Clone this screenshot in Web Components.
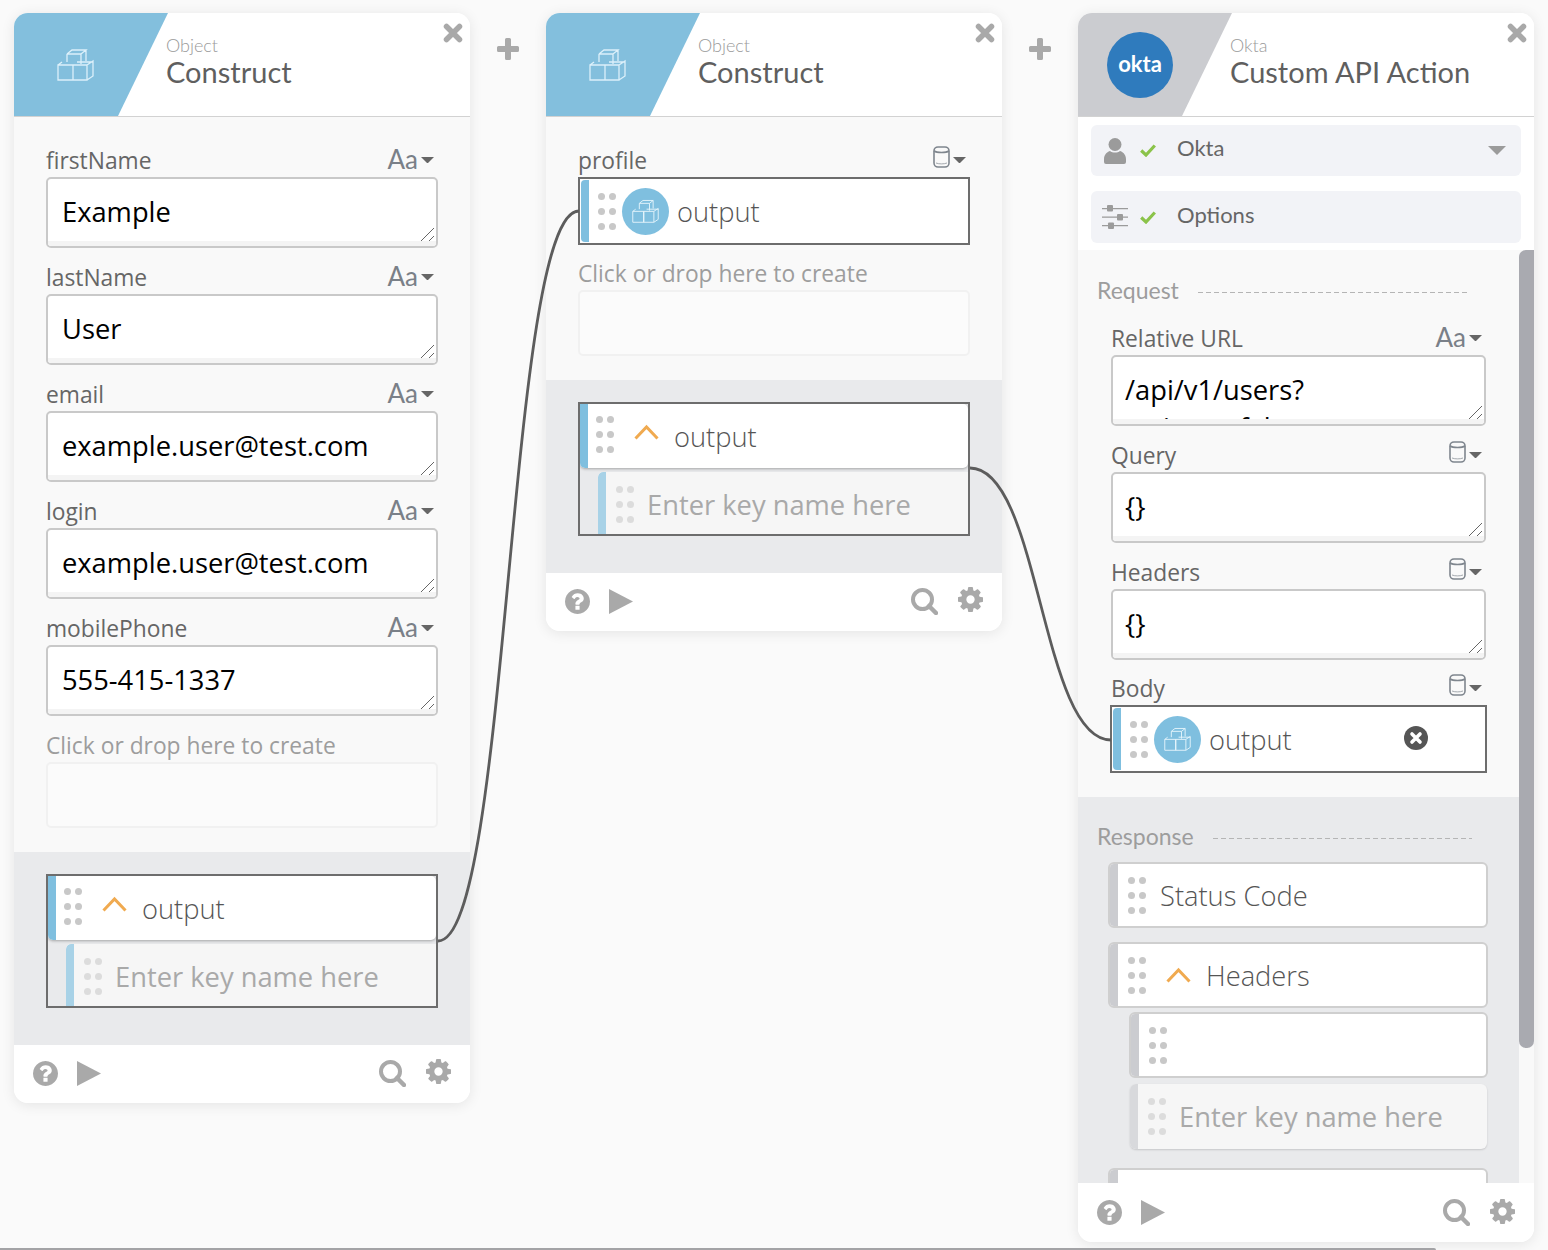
<!DOCTYPE html>
<html lang="en">
<head>
<meta charset="UTF-8">
<title>Workflow</title>
<style>
    html, body { margin: 0; height: 1250px; overflow: hidden; background: #fafafa; }
    body { font-family: "Open Sans", sans-serif; }
</style>
</head>
<body>

<wf-canvas>
    <wf-card>
        <wf-header kind="Object" title="Construct"><wf-icon name="cubes" style="--w:37px;--h:33px"></wf-icon></wf-header>
        <wf-pane style="--pad:16px 32px 22px">
            <wf-field label="firstName" type="aa"><wf-box>Example</wf-box></wf-field>
            <wf-field label="lastName" type="aa"><wf-box>User</wf-box></wf-field>
            <wf-field label="email" type="aa"><wf-box>example.user@test.com</wf-box></wf-field>
            <wf-field label="login" type="aa"><wf-box>example.user@test.com</wf-box></wf-field>
            <wf-field label="mobilePhone" type="aa"><wf-box>555-415-1337</wf-box></wf-field>
            <wf-field label="Click or drop here to create" muted><wf-box empty></wf-box></wf-field>
        </wf-pane>
        <wf-pane tone="gray" style="--pad:22px 32px 37px">
            <wf-group>
                <wf-tile plain tone="blue" chevron>output</wf-tile>
                <wf-tile plain child tone="blue">Enter key name here</wf-tile>
            </wf-group>
        </wf-pane>
        <wf-footer></wf-footer>
    </wf-card>

    <wf-plus></wf-plus>

    <wf-card>
        <wf-header kind="Object" title="Construct"><wf-icon name="cubes" style="--w:37px;--h:33px"></wf-icon></wf-header>
        <wf-pane style="--pad:16px 32px 22px">
            <wf-field label="profile" type="db" style="--after:1px"><wf-tile outlined tone="blue" badge>output</wf-tile></wf-field>
            <wf-field label="Click or drop here to create" muted><wf-box empty></wf-box></wf-field>
        </wf-pane>
        <wf-pane tone="gray" style="--pad:22px 32px 37px">
            <wf-group>
                <wf-tile plain tone="blue" chevron>output</wf-tile>
                <wf-tile plain child tone="blue">Enter key name here</wf-tile>
            </wf-group>
        </wf-pane>
        <wf-footer></wf-footer>
    </wf-card>

    <wf-plus></wf-plus>

    <wf-card style="--card-h:1229px">
        <wf-header kind="Okta" title="Custom API Action" tone="okta"><wf-okta></wf-okta></wf-header>
        <wf-pane style="--pad:8px 13px 7px;--bg:#fff;--gap:15px">
            <wf-row icon="person" height="51" caret>Okta</wf-row>
            <wf-row icon="sliders" height="52">Options</wf-row>
        </wf-pane>
        <wf-scroller>
            <wf-pane style="--pad:29px 33px 24px;--box-pad:12px">
                <wf-heading style="--left:-14px;--lead:18px;--below:10px">Request</wf-heading>
                <wf-field label="Relative URL" type="aa"><wf-box>/api/v1/users?<br>activate=false</wf-box></wf-field>
                <wf-field label="Query" type="db"><wf-box>{}</wf-box></wf-field>
                <wf-field label="Headers" type="db"><wf-box>{}</wf-box></wf-field>
                <wf-field label="Body" type="db" style="--after:0px;--label:43px"><wf-tile outlined tone="blue" badge clear style="margin:0 -1px">output</wf-tile></wf-field>
            </wf-pane>
            <wf-pane tone="gray" style="--pad:28px 31px 0 30px;--clip:386px">
                <wf-heading style="--left:-11px;--lead:16px;--below:15px">Response</wf-heading>
                <wf-tile indent>Status Code</wf-tile>
                <wf-tile indent chevron style="margin-top:14px">Headers</wf-tile>
                <wf-tile indent style="margin:4px 0 0 21px"></wf-tile>
                <wf-tile indent child-plain style="margin:6px 1px 0 22px">Enter key name here</wf-tile>
                <wf-tile indent style="margin-top:19px"></wf-tile>
            </wf-pane>
        </wf-scroller>
        <wf-footer style="--foot:59px;--foot-b:0px"></wf-footer>
    </wf-card>

    <wf-links></wf-links>
</wf-canvas>

<script>

    const ICONS = {
        cubes: `<svg viewBox="0 0 37 33" fill="none" stroke="currentColor" stroke-width="1.3">
            <path d="M1 17h15v15H1zM1 17l4-3M16 17v15M16 17h14v15H16zM30 17l6-4v15l-6 4M20 14h16"/>
            <path d="M10 6h14v10M10 6v8M10 6l5-4h14l-5 4M29 2v11"/></svg>`,
        caret: `<svg viewBox="0 0 14 7"><path d="M0 0h14L7 7z" fill="currentColor"/></svg>`,
        db: `<svg viewBox="0 0 17 22" fill="none" stroke="currentColor" stroke-width="1.6">
            <rect x="1" y="1" width="15" height="20" rx="4"/><path d="M1 5c3 2 12 2 15 0"/><path d="M3 17c3 1.200 8 1.200 11 0" stroke-width=".7"/></svg>`,
        chevron: `<svg viewBox="0 0 25 16" fill="none" stroke="currentColor" stroke-width="3"><path d="M1.500 14.500 12.500 3l11 11.500"/></svg>`,
        close: `<svg viewBox="0 0 20 20" fill="none" stroke="currentColor" stroke-width="5.500" stroke-linecap="round"><path d="M3.500 3.500l13 13M16.500 3.500l-13 13"/></svg>`,
        plus: `<svg viewBox="0 0 22 22"><path d="M8 1.500q0-1.500 1.500-1.500h3q1.500 0 1.500 1.500V8h6.500q1.500 0 1.500 1.500v3q0 1.500-1.500 1.500H14v6.500q0 1.500-1.500 1.500h-3Q8 22 8 20.500V14H1.500Q0 14 0 12.500v-3Q0 8 1.500 8H8z" fill="currentColor"/></svg>`,
        help: `<svg viewBox="128 128 1536 1536"><path fill="currentColor" d="M1024 1376v-192q0-14-9-23t-23-9h-192q-14 0-23 9t-9 23v192q0 14 9 23t23 9h192q14 0 23-9t9-23zm256-672q0-88-55.500-163t-138.500-116-170-41q-243 0-371 213-15 24 8 42l132 100q7 6 19 6 16 0 25-12 53-68 86-92 34-24 86-24 48 0 85.500 26t37.500 59q0 38-20 61t-68 45q-63 28-115.500 86.500t-52.500 125.500v36q0 14 9 23t23 9h192q14 0 23-9t9-23q0-19 21.500-49.500t54.500-49.500q32-18 49-28.500t46-35 44.500-48 28-60.500 12.500-81zm384 192q0 209-103 385.500t-279.500 279.500-385.500 103-385.500-103-279.500-279.500-103-385.500 103-385.500 279.500-279.500 385.500-103 385.500 103 279.500 279.500 103 385.500z"/></svg>`,
        play: `<svg viewBox="0 0 24 25"><path d="M0 0l24 12.500L0 25z" fill="currentColor"/></svg>`,
        search: `<svg viewBox="0 0 27 27" fill="none" stroke="currentColor"><circle cx="11.500" cy="11.500" r="9.500" stroke-width="4"/><path d="M18 18l7 7" stroke-width="4.500" stroke-linecap="round"/></svg>`,
        gear: `<svg viewBox="128 128 1536 1536"><path fill="currentColor" d="M1152 896q0-106-75-181t-181-75-181 75-75 181 75 181 181 75 181-75 75-181zm512-109v222q0 12-8 23t-20 13l-185 28q-19 54-39 91 35 50 107 138 10 12 10 25t-9 23q-27 37-99 108t-94 71q-12 0-26-9l-138-108q-44 23-91 38-16 136-29 186-7 28-36 28h-222q-14 0-24.500-8.500t-11.500-21.500l-28-184q-49-16-90-37l-141 107q-10 9-25 9-14 0-25-11-126-114-165-168-7-10-7-23 0-12 8-23 15-21 51-66.500t54-70.500q-27-50-41-99l-183-27q-13-2-21-12.500t-8-23.500v-222q0-12 8-23t19-13l186-28q14-46 39-92-40-57-107-138-10-12-10-24 0-10 9-23 26-36 98.500-107.500t94.500-71.500q13 0 26 10l138 107q44-23 91-38 16-136 29-186 7-28 36-28h222q14 0 24.500 8.500t11.500 21.500l28 184q49 16 90 37l142-107q9-9 24-9 13 0 25 10 129 119 165 170 7 8 7 22 0 12-8 23-15 21-51 66.500t-54 70.500q26 50 41 98l183 28q13 2 21 12.500t8 23.500z"/></svg>`,
        person: `<svg viewBox="0 0 22 26"><circle cx="11" cy="6.500" r="6.500" fill="currentColor"/><path d="M0 21c0-5 4-7.500 6-8 2.500 2 7.500 2 10 0 2 .5 6 3 6 8v3q0 2-2 2H2q-2 0-2-2z" fill="currentColor"/></svg>`,
        sliders: `<svg viewBox="0 0 26 24" fill="currentColor"><path d="M0 3h26v1.300H0zM0 11.500h26v1.300H0zM0 20h26v1.300H0z"/><rect x="5" y="0" width="6" height="6.500" rx="1"/><rect x="15" y="9" width="6" height="6.500" rx="1"/><rect x="6" y="17.500" width="6" height="6.500" rx="1"/></svg>`,
        check: `<svg viewBox="0 0 16 13" fill="none" stroke="currentColor" stroke-width="3.200"><path d="M1.200 6.500 6 11l8.800-9.500"/></svg>`,
        clear: `<svg viewBox="0 0 24 24"><circle cx="12" cy="12" r="12" fill="currentColor"/><path d="M8 8l8 8M16 8l-8 8" stroke="#fff" stroke-width="3.600" stroke-linecap="round"/></svg>`,
        grip: `<svg viewBox="0 0 14 14" fill="none" stroke="#666" stroke-width="1"><path d="M1 14 14 1M9 14l5-5"/></svg>`
    };

    class WfIcon extends HTMLElement {
        constructor() {
            super();
            this.attachShadow({mode: "open"});
            this.shadowRoot.innerHTML = `<style>
                :host { display: block; width: var(--w, 20px); height: var(--h, 20px); color: var(--c, #a9a9a9); flex: none; }
                svg { display: block; width: 100%; height: 100%; }
            </style>${ICONS[this.getAttribute("name")]}`;
        }
    }

    class WfCanvas extends HTMLElement {
        constructor() {
            super();
            this.attachShadow({mode: "open"});
            this.shadowRoot.innerHTML = `<style>
                :host { display: flex; align-items: flex-start; box-sizing: border-box; width: 1548px; height: 1250px; padding: 13px 14px 0; position: relative; overflow: hidden; }
                .hbar { position: absolute; left: 0; bottom: 0; width: 1436px; height: 2px; background: #a3a3a6; border-radius: 0 2px 0 0; }
            </style><slot></slot><div class="hbar"></div>`;
        }
    }

    class WfCard extends HTMLElement {
        constructor() {
            super();
            this.attachShadow({mode: "open"});
            this.shadowRoot.innerHTML = `<style>
                :host { display: flex; flex-direction: column; flex: none; width: 456px; height: var(--card-h, auto); background: #fff; border-radius: 14px; overflow: hidden; box-shadow: 0 2px 14px rgba(0,0,0,.09); }
            </style><slot></slot>`;
        }
    }

    class WfHeader extends HTMLElement {
        constructor() {
            super();
            this.attachShadow({mode: "open"});
            this.shadowRoot.innerHTML = `<style>
                :host { display: flex; flex: none; height: 103px; position: relative; background: #fff; border-bottom: 1px solid #d2d2d2; font-family: Lato, sans-serif; }
                .shape { width: 154px; display: flex; align-items: center; background: #83bfdd; clip-path: polygon(0 0, 100% 0, 104px 100%, 0 100%); padding-left: 43px; box-sizing: border-box; --c: #dcf0fa; }
                :host([tone=okta]) .shape { background: #cbccd0; padding-left: 29px; }
                .text { margin-left: -2px; padding-top: 20px; }
                .kind { font-size: 18px; line-height: 24px; color: #9a9a9a; font-weight: 300; }
                .title { font-size: 29px; line-height: 34px; color: #5f5f5f; margin-top: -2px; }
                wf-icon { position: absolute; top: 10px; right: 7px; }
            </style>
            <div class="shape"><slot></slot></div>
            <div class="text">
                <div class="kind">${this.getAttribute("kind")}</div>
                <div class="title">${this.getAttribute("title")}</div>
            </div>
            <wf-icon name="close"></wf-icon>`;
        }
    }

    class WfOkta extends HTMLElement {
        constructor() {
            super();
            this.attachShadow({mode: "open"});
            this.shadowRoot.innerHTML = `<style>
                :host { display: flex; align-items: center; justify-content: center; flex: none; box-sizing: border-box; width: 66px; height: 66px; padding-bottom: 2px; border-radius: 50%; background: #2f7bbd; color: #fff; font: 700 22px/1 Lato, sans-serif; }
            </style>okta`;
        }
    }

    class WfPane extends HTMLElement {
        constructor() {
            super();
            this.attachShadow({mode: "open"});
            this.shadowRoot.innerHTML = `<style>
                :host { display: flex; flex-direction: column; flex: none; gap: var(--gap, 0); padding: var(--pad, 0); background: var(--bg, #f9f9f9); height: var(--clip, auto); overflow: hidden; box-sizing: border-box; }
                :host([tone=gray]) { background: #e9eaec; }
            </style><slot></slot>`;
        }
    }

    class WfField extends HTMLElement {
        constructor() {
            super();
            const type = this.getAttribute("type");
            let tool = "";
            if (type === "aa") tool = `<span class="aa">Aa</span>`;
            if (type === "db") tool = `<wf-icon name="db" style="--w:17px;--h:22px;--c:#7f868e"></wf-icon>`;
            if (type) tool += `<wf-icon class="caret" name="caret" style="--w:13px;--h:6.500px;--c:#666"></wf-icon>`;
            this.attachShadow({mode: "open"});
            this.shadowRoot.innerHTML = `<style>
                :host { display: block; margin-bottom: var(--after, 2px); }
                .top { display: flex; align-items: flex-end; height: var(--label, 44px); box-sizing: border-box; padding: 0 4px 3px 0; }
                label { flex: 1; font-size: 22.800px; line-height: 26px; color: #666; }
                :host([muted]) label { color: #9d9d9d; }
                .tool { display: flex; align-items: center; gap: 3px; margin-bottom: 2px; }
                .tool.db { margin-bottom: 6px; }
                .caret { margin-top: 2px; }
                .tool.db .caret { margin-top: 6px; }
                .aa { font: 26px/26px Lato, sans-serif; color: #7a8088; }
            </style>
            <div class="top"><label>${this.getAttribute("label")}</label><div class="tool ${type || ""}">${tool}</div></div>
            <slot></slot>`;
        }
    }

    class WfBox extends HTMLElement {
        constructor() {
            super();
            this.attachShadow({mode: "open"});
            this.shadowRoot.innerHTML = `<style>
                :host { display: block; box-sizing: border-box; height: 71px; border: 2px solid #c9c9c9; border-radius: 5px; background: #fff; overflow: hidden; position: relative; }
                :host([empty]) { height: 66px; border-color: #f1f1f1; background: #fbfbfb; }
                .text { height: 64px; overflow: hidden; padding: 14px var(--box-pad, 14px) 0; box-sizing: border-box; font-size: 27.300px; line-height: 38px; color: #000; }
                .band { position: absolute; left: 0; right: 0; bottom: 0; height: 5px; background: #f4f4f4; }
                wf-icon { position: absolute; right: 2px; bottom: 5px; }
                :host([empty]) .band, :host([empty]) wf-icon { display: none; }
            </style>
            <div class="text"><slot></slot></div><div class="band"></div>
            <wf-icon name="grip" style="--w:14px;--h:14px"></wf-icon>`;
        }
    }

    class WfDots extends HTMLElement {
        constructor() {
            super();
            this.attachShadow({mode: "open"});
            this.shadowRoot.innerHTML = `<style>
                :host { display: grid; grid-template-columns: 7px 7px; gap: 8px 4px; flex: none; color: #c8c8c8; }
                i { width: 7px; height: 7px; border-radius: 50%; background: currentColor; }
            </style><i></i><i></i><i></i><i></i><i></i><i></i>`;
        }
    }

    class WfTile extends HTMLElement {
        constructor() {
            super();
            const extra =
                (this.hasAttribute("chevron") ? `<wf-icon class="chev" name="chevron" style="--w:25px;--h:16px;--c:#f0aa50"></wf-icon>` : "") +
                (this.hasAttribute("badge") ? `<div class="badge"><wf-icon name="cubes" style="--w:27px;--h:24px;--c:#e4f3fb"></wf-icon></div>` : "");
            const clear = this.hasAttribute("clear") ? `<wf-icon class="clear" name="clear" style="--w:24px;--h:24px;--c:#555"></wf-icon>` : "";
            this.attachShadow({mode: "open"});
            this.shadowRoot.innerHTML = `<style>
                :host { display: flex; align-items: center; box-sizing: border-box; height: 66px; background: #fff; border: 2px solid #cfcfcf; border-radius: 6px; overflow: hidden; font-size: 27.300px; font-weight: 300; color: #555; flex: none; }
                .bar { width: 8px; align-self: stretch; flex: none; background: #cbccd0; }
                :host([tone=blue]) .bar { background: #7fbfdf; }
                wf-dots { margin: 0 14px 0 10px; }
                .chev { margin: -1px 15px 0 6px; }
                .badge { width: 47px; height: 47px; border-radius: 50%; background: #7fbfdf; display: flex; align-items: center; justify-content: center; margin-left: -8px; margin-right: 8px; flex: none; }
                .clear { margin: -2px 56px 0 auto; }
                /* inside a group: no border, the group draws it */
                :host([plain]) { border: 0; border-radius: 0 5px 5px 5px; height: 64px; box-shadow: 0 1px 3px rgba(0,0,0,.3); }
                :host([plain]) wf-dots { margin: 0 14px 4px 8px; }
                :host([plain]) .chev { margin-bottom: 7px; }
                :host([plain][child]) { height: 62px; margin: 4px 0 0 18px; background: #f6f6f6; color: #a9a9a9; font-weight: 400; border-radius: 5px 0 0 0; box-shadow: none; }
                :host([plain][child]) .bar { background: #a8d2e7; border-radius: 5px 0 0 0; }
                :host([plain][child]) wf-dots { color: #dcdcdc; margin: 2px 13px 0 10px; }
                :host([plain][child]) span { margin-top: 2px; }
                :host([child-plain]) { height: 65px; border: 0; background: #f6f6f6; color: #a9a9a9; font-weight: 400; box-shadow: 0 1px 2px rgba(0,0,0,.15); }
                :host([child-plain]) .bar { background: #d8d9dc; }
                :host([child-plain]) wf-dots { color: #dcdcdc; margin-right: 13px; }
                :host([outlined]) { height: 68px; border: 2px solid #6d6d6d; border-radius: 0; padding: 1px; }
                :host([outlined]) .bar { border-radius: 4px 0 0 4px; }
                :host([outlined]) wf-dots { margin-left: 9px; }
            </style>
            <div class="bar"></div><wf-dots></wf-dots>${extra}<span><slot></slot></span>${clear}`;
        }
    }

    class WfGroup extends HTMLElement {
        constructor() {
            super();
            this.attachShadow({mode: "open"});
            this.shadowRoot.innerHTML = `<style>
                :host { display: flex; flex-direction: column; box-sizing: border-box; height: 134px; border: 2px solid #6d6d6d; overflow: hidden; }
            </style><slot></slot>`;
        }
    }

    class WfFooter extends HTMLElement {
        constructor() {
            super();
            this.attachShadow({mode: "open"});
            this.shadowRoot.innerHTML = `<style>
                :host { display: flex; align-items: center; flex: none; box-sizing: border-box; height: var(--foot, 58px); background: #fff; padding: 0 19px var(--foot-b, 2px); }
                .gap { flex: 1; }
            </style>
            <wf-icon name="help" style="--w:25px;--h:25px"></wf-icon>
            <wf-icon name="play" style="--w:24px;--h:25px;margin-left:19px"></wf-icon>
            <div class="gap"></div>
            <wf-icon name="search" style="--w:27px;--h:27px"></wf-icon>
            <wf-icon name="gear" style="--w:25px;--h:25px;margin:-3px 0 0 20px"></wf-icon>`;
        }
    }

    class WfPlus extends HTMLElement {
        constructor() {
            super();
            this.attachShadow({mode: "open"});
            this.shadowRoot.innerHTML = `<style>
                :host { display: flex; justify-content: center; flex: none; width: 76px; padding-top: 25px; }
            </style><wf-icon name="plus" style="--w:22px;--h:22px"></wf-icon>`;
        }
    }

    class WfRow extends HTMLElement {
        constructor() {
            super();
            const caret = this.hasAttribute("caret") ? `<wf-icon class="caret" name="caret" style="--w:18px;--h:9px;--c:#9b9b9b"></wf-icon>` : "";
            const person = this.getAttribute("icon") === "person";
            this.attachShadow({mode: "open"});
            this.shadowRoot.innerHTML = `<style>
                :host { display: flex; align-items: center; flex: none; height: ${this.getAttribute("height")}px; background: #f2f3f7; border-radius: 6px; padding-left: 11px; font: 22px/1 Lato, sans-serif; color: #666; }
                .ic { width: 38px; flex: none; }
                .ck { width: 37px; flex: none; }
                span { flex: 1; padding-bottom: 5px; }
                .caret { margin-right: 15px; }
            </style>
            <div class="ic"><wf-icon name="${this.getAttribute("icon")}" style="--w:${person ? 22 : 26}px;--h:${person ? 26 : 24}px;--c:#9b9b9b;margin-left:${person ? 2 : 0}px"></wf-icon></div>
            <div class="ck"><wf-icon name="check" style="--w:16px;--h:13px;--c:#8bc34a"></wf-icon></div>
            <span><slot></slot></span>${caret}`;
        }
    }

    class WfHeading extends HTMLElement {
        constructor() {
            super();
            this.attachShadow({mode: "open"});
            this.shadowRoot.innerHTML = `<style>
                :host { display: flex; align-items: center; flex: none; gap: 19px; height: 22px; margin: 0 var(--lead, 0) var(--below, 0) var(--left, 0); font: 23px/22px Lato, sans-serif; color: #9d9d9d; }
                .dash { flex: 1; height: 1px; margin-top: 4px; background: repeating-linear-gradient(90deg, #b5b5b5 0 5px, transparent 5px 8px); }
            </style><slot></slot><div class="dash"></div>`;
        }
    }

    class WfScroller extends HTMLElement {
        constructor() {
            super();
            this.attachShadow({mode: "open"});
            this.shadowRoot.innerHTML = `<style>
                :host { display: grid; grid-template-columns: 441px 15px; height: 933px; flex: none; overflow: hidden; background: #f9f9f9; }
                .content { display: flex; flex-direction: column; overflow: hidden; }
                .thumb { height: 798px; background: #a9aab0; border-radius: 7px 0 7px 7px; }
            </style><div class="content"><slot></slot></div><div><div class="thumb"></div></div>`;
        }
    }

    // wires between cards, over everything else
    class WfLinks extends HTMLElement {
        constructor() {
            super();
            this.attachShadow({mode: "open"});
            this.shadowRoot.innerHTML = `<style>
                :host { position: absolute; left: 0; top: 0; width: 1548px; height: 1250px; pointer-events: none; }
            </style>
            <svg width="1548" height="1250" fill="none" stroke="#5c5c5c" stroke-width="2.800">
                <path d="M438 941C510 941 507 211 579 211"/>
                <path d="M970 468C1040 468 1041 740 1111 740"/>
            </svg>`;
        }
    }

    window.customElements.define('wf-icon', WfIcon);
    window.customElements.define('wf-canvas', WfCanvas);
    window.customElements.define('wf-card', WfCard);
    window.customElements.define('wf-header', WfHeader);
    window.customElements.define('wf-okta', WfOkta);
    window.customElements.define('wf-pane', WfPane);
    window.customElements.define('wf-field', WfField);
    window.customElements.define('wf-box', WfBox);
    window.customElements.define('wf-dots', WfDots);
    window.customElements.define('wf-tile', WfTile);
    window.customElements.define('wf-group', WfGroup);
    window.customElements.define('wf-footer', WfFooter);
    window.customElements.define('wf-plus', WfPlus);
    window.customElements.define('wf-row', WfRow);
    window.customElements.define('wf-heading', WfHeading);
    window.customElements.define('wf-scroller', WfScroller);
    window.customElements.define('wf-links', WfLinks);

</script>
</body>
</html>
